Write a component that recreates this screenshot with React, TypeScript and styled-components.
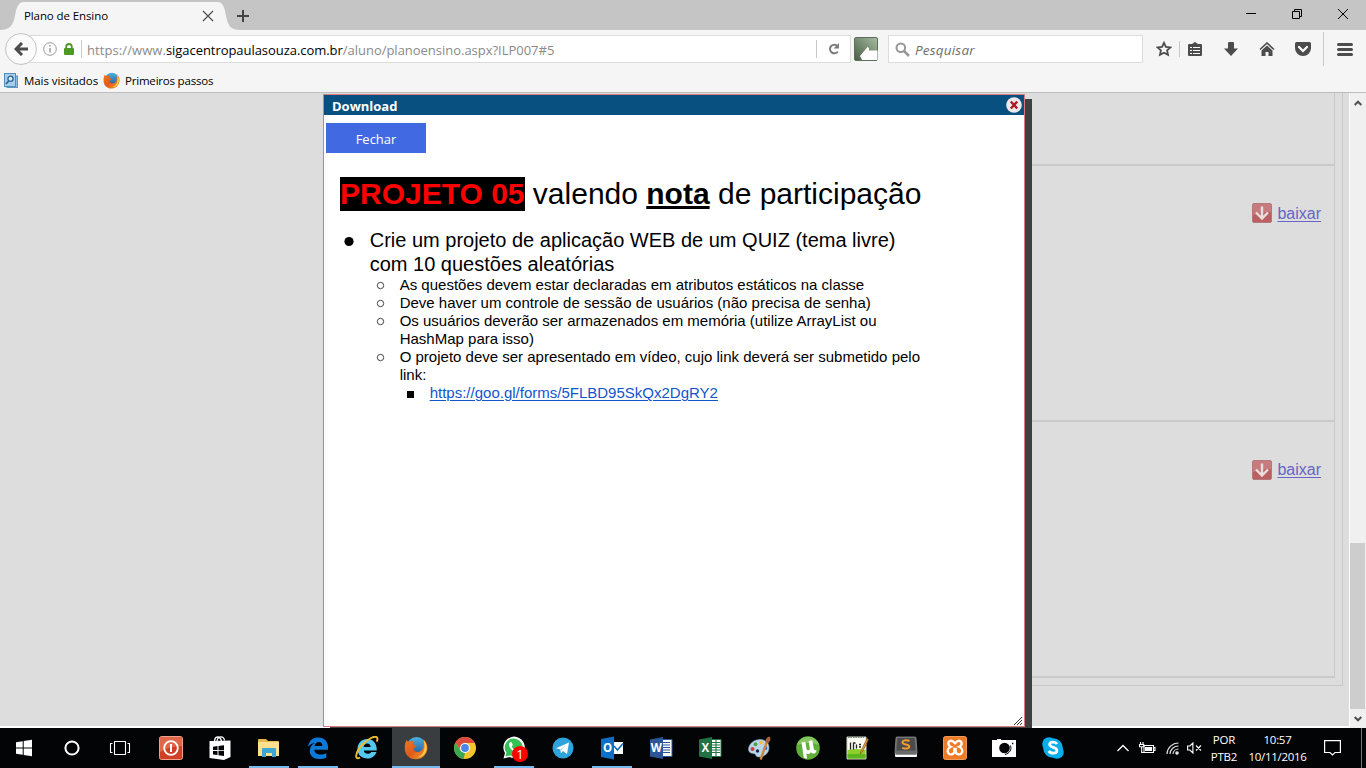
import React from "react";
import styled, { createGlobalStyle } from "styled-components";

const Global = createGlobalStyle`
  * { box-sizing: border-box; }
  body { margin: 0; overflow: hidden; }
  svg { display: block; flex: none; }
`;

const Screen = styled.div`
  width: 1366px;
  height: 768px;
  display: flex;
  flex-direction: column;
  overflow: hidden;
  background: #f5f5f5;
  font-family: "Open Sans", "Noto Sans", sans-serif;
  color: #000;
`;

const Label = styled.span<{ $size?: number; $track?: number; $color?: string }>`
  font-size: ${(p) => p.$size ?? 11.5}px;
  letter-spacing: ${(p) => p.$track ?? 0}px;
  color: ${(p) => p.$color ?? "#000"};
  white-space: pre;
  line-height: 16px;
`;

/* ---------- title bar ---------- */

const TitleBar = styled.div`
  height: 30px;
  flex: none;
  display: flex;
  align-items: flex-end;
  background: #c5c5c5;
`;

const TabBody = styled.div`
  width: 194px;
  height: 28px;
  display: flex;
  align-items: center;
  justify-content: space-between;
  background: #f5f5f5;
  padding: 0 4px 0 0;
`;

const NewTab = styled.div`
  flex: 1;
  height: 28px;
  padding-top: 8px;
  margin-left: -3px;
`;

const WindowButton = styled.div`
  width: 46px;
  height: 30px;
  display: flex;
  align-items: center;
  justify-content: center;
  padding-bottom: 2px;
`;

/* ---------- navigation bar ---------- */

const NavBar = styled.div`
  height: 38px;
  flex: none;
  display: flex;
  align-items: center;
  padding-left: 5px;
`;

const BackButton = styled.div`
  width: 32px;
  height: 32px;
  flex: none;
  border-radius: 50%;
  border: 1px solid #c4c4c4;
  background: #fafafa;
  display: flex;
  align-items: center;
  justify-content: center;
  z-index: 1;
`;

const AddressBox = styled.div`
  width: 828px;
  height: 28px;
  flex: none;
  margin-left: -14px;
  padding-left: 19px;
  border: 1px solid #dcdcdc;
  background: #fff;
  display: flex;
  align-items: center;
`;

const Divider = styled.div<{ $h: number; $pull?: number }>`
  width: 1px;
  height: ${(p) => p.$h}px;
  margin-left: ${(p) => -(p.$pull ?? 0)}px;
  flex: none;
  background: #c9c9c9;
`;

const Address = styled.div`
  flex: 1;
  margin-left: 5px;
  padding-top: 1px;
  font-size: 0;
`;

const SearchBox = styled.div`
  width: 255px;
  height: 28px;
  flex: none;
  margin-left: 7px;
  padding-left: 6px;
  border: 1px solid #dcdcdc;
  background: #fff;
  display: flex;
  align-items: center;
  gap: 5px;
  font-style: italic;
  & > span { padding-top: 1px; }
`;

const ToolSlot = styled.div<{ $w: number }>`
  width: ${(p) => p.$w}px;
  display: flex;
  justify-content: center;
  flex: none;
`;

/* ---------- bookmarks ---------- */

const Bookmarks = styled.div`
  height: 25px;
  flex: none;
  display: flex;
  align-items: center;
  padding-left: 4px;
  border-bottom: 1px solid #bcbcbc;
`;

const Bookmark = styled.div<{ $w: number; $gap: number }>`
  width: ${(p) => p.$w}px;
  display: flex;
  align-items: center;
  gap: ${(p) => p.$gap}px;
  & > span { padding-top: 1px; }
`;

/* ---------- page ---------- */

const Viewport = styled.div`
  height: 635px;
  flex: none;
  display: flex;
  position: relative;
  overflow: hidden;
  background: #fff;
`;

const Page = styled.div`
  width: 1349px;
  height: 633px;
  padding-left: 330px;
  background: #dddddd;
`;

const OuterPanel = styled.div`
  width: 1013px;
  height: 593px;
  border: solid #c8c8c8;
  border-width: 0 1px 1px 0;
`;

const Lessons = styled.div`
  width: 1005px;
  height: 585px;
  border-right: 1px solid #c8c8c8;
`;

const Lesson = styled.div<{ $h: number }>`
  height: ${(p) => p.$h}px;
  border-bottom: 2px solid #c9c9c9;
  display: flex;
  justify-content: flex-end;
  align-items: flex-start;
  padding: 38px 13px 0 0;
`;

const DownloadLink = styled.a<{ $lift?: number }>`
  display: flex;
  align-items: flex-start;
  gap: 5px;
  font: 16px/20px "Liberation Sans", Arial, sans-serif;
  color: #6a63c6;
  text-decoration: underline;
  text-underline-offset: 2px;
  & > svg { margin-top: ${(p) => -(p.$lift ?? 0)}px; }
`;

const ScrollBar = styled.div`
  width: 16px;
  height: 635px;
  margin-left: 1px;
  background: #f0f0f0;
  display: flex;
  flex-direction: column;
  align-items: center;
  padding: 7px 1px 6px 0;
`;

const ScrollThumb = styled.div`
  width: 15px;
  height: 166px;
  margin: 437px 0 auto;
  background: #cdcdcd;
`;

/* ---------- dialog ---------- */

const Dialog = styled.div`
  position: absolute;
  left: 323px;
  top: 1px;
  width: 702px;
  height: 633px;
  border: 1px solid #d97c80;
  background: #fff;
  box-shadow: 7px 5px 0 #404040;
`;

const DialogTitle = styled.div`
  height: 20px;
  background: #07507f;
  display: flex;
  align-items: center;
  justify-content: space-between;
  padding: 0 2px 0 8px;
  font-weight: 700;
  & > span { padding-top: 1px; }
`;

const CloseButton = styled.button`
  display: flex;
  align-items: center;
  justify-content: center;
  width: 100px;
  height: 30px;
  margin: 8px 0 0 2px;
  padding: 2px 0 0;
  border: 0;
  background: #4169e1;
  font-family: inherit;
`;

const Doc = styled.div`
  font-family: "Liberation Sans", Arial, sans-serif;
  padding: 24px 0 0 15.7px;
`;

const DocTitle = styled.h1`
  margin: 0 0 17px;
  padding-left: 0.3px;
  font-size: 30px;
  line-height: 34px;
  font-weight: 400;
  white-space: pre;
`;

const Mark = styled.b`
  background: #000;
  color: #f00;
  padding-bottom: 1px;
`;

const List = styled.ul<{ $size: number; $line: number }>`
  list-style: none;
  margin: 0;
  padding: 0;
  font-size: ${(p) => p.$size}px;
  line-height: ${(p) => p.$line}px;
`;

const Item = styled.li<{ $line: number }>`
  display: grid;
  grid-template-columns: 30px auto;
  white-space: pre;
  & > svg { height: ${(p) => p.$line}px; }
`;

const DocLink = styled.a`
  color: #1155cc;
  text-decoration: underline;
  text-underline-offset: 2px;
`;

const Grip = styled.div`
  position: absolute;
  right: 2px;
  bottom: 1px;
`;

/* ---------- taskbar ---------- */

const Taskbar = styled.div`
  height: 40px;
  flex: none;
  display: flex;
  background: #020406;
`;

const TaskButton = styled.div<{ $active?: boolean; $first?: boolean }>`
  width: 48px;
  height: 40px;
  flex: none;
  margin-left: ${(p) => (p.$first ? 0 : 1)}px;
  display: flex;
  flex-direction: column;
  align-items: center;
  justify-content: space-between;
  padding-top: 8px;
  background: ${(p) => (p.$active ? "#3a3d40" : "transparent")};
`;

const RunningLine = styled.div<{ $w: number }>`
  width: ${(p) => p.$w}px;
  height: 2px;
  background: #76b9ed;
`;

const AppGroup = styled.div`
  display: flex;
  margin-left: 2px;
`;

const Tray = styled.div`
  flex: 1;
  display: flex;
  align-items: center;
  padding: 0 4px 0 40px;
  & > div:last-child { margin-left: auto; background: #777; }
`;

const TrayText = styled.div<{ $w: number; $pull?: number }>`
  width: ${(p) => p.$w}px;
  margin-left: ${(p) => -(p.$pull ?? 0)}px;
  display: flex;
  flex-direction: column;
  align-items: center;
  padding-bottom: 1px;
  & > span { line-height: 17px; }
`;

/* ---------- icons ---------- */

const FirefoxIcon = ({ s = 24 }: { s?: number }) => (
  <svg width={s} height={s} viewBox="0 0 24 24">
    <defs>
      <linearGradient id={"fx" + s} x1="0" y1="0" x2="1" y2="1">
        <stop offset="0" stopColor="#ec7a1f" />
        <stop offset=".5" stopColor="#e25a1c" />
        <stop offset="1" stopColor="#f5a52c" />
      </linearGradient>
      <linearGradient id={"globe" + s} x1="0" y1="0" x2="0" y2="1">
        <stop offset="0" stopColor="#4cb2e2" />
        <stop offset="1" stopColor="#1c4f96" />
      </linearGradient>
    </defs>
    <circle cx="12.500" cy="11" r="10" fill={`url(#globe${s})`} />
    <path d="M2.500 4c.5 1 1.500 1.800 3 1.700 1.500-.8 3.500-1 5 0-1.500 1-1.800 2-1.300 2.800l3.300 1c-.2 1.800-2.800 1.800-3 3.500.7 3 4.300 4 7.300 2 2.700-2.200 3-5.500 1.700-8.500 1 .4 1.700 1.200 2 2 .2-2-.3-3.800-1.500-5.500 5.500 4 6 12 1 17C14 25.500 3.500 24 1.200 15.500.3 11.500.8 7 2.500 4z" fill={`url(#fx${s})`} />
    <path d="M19.500 4c4.500 4.500 4 12-.5 15.500-1.500 1.200-3.500 2-5.500 1.800 6.500-2 8.500-9 6-17.300z" fill="#fdd04a" />
  </svg>
);

const DownloadIcon = () => (
  <svg width="20" height="20" viewBox="0 0 20 20">
    <rect x=".5" y=".5" width="19" height="19" rx="1.500" fill="#bb5f63" stroke="#b5797b" />
    <path d="M1 1h18v8q-9 0-18 3z" fill="#c77b7e" />
    <path d="M10 3.500v11.500M4 9.500l6 6 6-6" fill="none" stroke="#e9dede" strokeWidth="2.400" />
  </svg>
);

const WindowsIcon = () => (
  <svg width="16" height="24" viewBox="0 0 16 24">
    <path d="M0 6.200l6.700-1v6.300H0zM7.700 5L16 3.800v7.700H7.700zM0 12.500h6.700v6.300L0 17.800zM7.700 12.500H16v7.700L7.700 19z" fill="#fff" />
  </svg>
);
const CortanaIcon = () => (
  <svg width="24" height="24"><circle cx="12" cy="12" r="6.600" fill="none" stroke="#fff" strokeWidth="2" /></svg>
);
const TaskViewIcon = () => (
  <svg width="24" height="24" fill="none" stroke="#fff" strokeWidth="1.100">
    <path d="M6.500 5.500h11v13h-11zM4.500 7.500h-2v9h2M19.500 7.500h2v9h-2" />
  </svg>
);
const PowerIcon = () => (
  <svg width="24" height="24">
    <rect x=".5" y=".5" width="23" height="23" rx="2" fill="#cf4026" stroke="#f0a08c" />
    <path d="M1 1h22v9Q10 10 1 16z" fill="#e0664a" />
    <circle cx="12" cy="12" r="6.800" fill="none" stroke="#fff" strokeWidth="1.800" />
    <path d="M12 8v8" stroke="#fff" strokeWidth="2" />
  </svg>
);
const StoreIcon = () => (
  <svg width="24" height="24">
    <path d="M1.500 5l21-.5V21L16 24l-14.500-2z" fill="#fff" />
    <path d="M6.500 6C6.500-.5 12-.5 13.500 5M9 5c1-6 7-5 7.500-.5" fill="none" stroke="#fff" strokeWidth="1.300" />
    <path d="M5 10.700l4.500-.6v4H5zM10.500 10l5.500-.8v5h-5.500zM5 15h4.500v4L5 18.500zM10.500 15H16v5l-5.500-.8z" fill="#020406" />
  </svg>
);
const FolderIcon = () => (
  <svg width="24" height="24">
    <path d="M1 4q0-1 1-1h7l2 2h10q1 0 1 1v14H1z" fill="#e9b94f" />
    <path d="M1 6h21v14H1z" fill="#fbe08e" />
    <path d="M5 13q0-1 1-1h12q1 0 1 1v8h-4v-4H9v4H5z" fill="#3ca7d4" />
  </svg>
);
const EdgeIcon = () => (
  <svg width="24" height="24">
    <path d="M2 10.800C3 4 7.500 1.500 12 1.500c7 0 10 5 10 9v3.300H8.300c.2 3.400 3 4.700 6 4.700 2.400 0 4.400-.6 6-1.600v4.600c-2 1.200-4.500 1.600-7 1.600-6 0-9.500-3.400-9.500-8 0-4 2.200-6.500 5-8-3 .7-5.200 1.700-6.800 3.700zM8.600 10h7.800c0-2.500-1.400-4-3.700-4S8.900 7.700 8.600 10z" fill="#0c7ad8" />
  </svg>
);
const IeIcon = () => (
  <svg width="24" height="24">
    <path d="M2.500 13C2.500 7 7 3 12.200 3c6 0 9.800 4.500 9.600 11.500H8.800c.3 2.300 1.800 3.200 3.800 3.200 1.600 0 3-.6 3.700-1.800h5.200c-1.300 4-4.600 6.600-9.200 6.600-5.600 0-9.800-3.500-9.800-9.500zM8.700 11h7c-.2-2.200-1.400-3.400-3.400-3.400S9 8.800 8.700 11z" fill="#55c8ef" />
    <path d="M5 21.500C-1.500 25 1 15 7.500 8.500 13 3 20-1 22 1.500c.8 1.200.3 3-.3 4.200" fill="none" stroke="#f0bd2e" strokeWidth="1.900" />
  </svg>
);
const ChromeIcon = () => (
  <svg width="24" height="24">
    <circle cx="12" cy="12" r="11" fill="#f4c52c" />
    <path d="M2.500 6.500A11 11 0 0 1 21.700 7H12L7.500 14z" fill="#dc4b3e" />
    <path d="M2.500 6.500L7.600 14.700 12 17l-1.500 5.900A11 11 0 0 1 2.500 6.500z" fill="#3aa757" />
    <circle cx="12" cy="12" r="5" fill="#fff" />
    <circle cx="12" cy="12" r="3.900" fill="#4a86e8" />
  </svg>
);
const BadgeSlot = styled.div`
  position: relative;
  width: 24px;
  height: 24px;
`;
const Badge = styled.div`
  position: absolute;
  left: 10px;
  top: 10px;
  width: 16px;
  height: 16px;
  border-radius: 50%;
  background: #f00;
  color: #fff;
  font-size: 13px;
  line-height: 16px;
  text-align: center;
`;
const WhatsAppIcon = () => (
  <BadgeSlot>
    <svg width="24" height="24">
      <path d="M1.500 22.500L3 17A10.700 10.700 0 1 1 7.500 21z" fill="#fff" />
      <path d="M3.400 20.600l1-4A8.900 8.900 0 1 1 8 19.500z" fill="#35c255" />
      <path d="M8.500 6c-3 2-1 6 2 8.500 3 2.300 6 2.500 7-.5l-3-1.600-1.300 1.400c-1.600-.6-2.800-1.800-3.500-3.300l1.100-1.400L9.500 6z" fill="#fff" />
    </svg>
    <Badge>1</Badge>
  </BadgeSlot>
);
const TelegramIcon = () => (
  <svg width="24" height="24">
    <circle cx="12" cy="12" r="10.500" fill="#2fa3dc" />
    <path d="M5 12.300L18 6.500 16 18l-4-3-2 2.200-.6-3.600z" fill="#fff" />
    <path d="M9.500 13.500L15 9l-4.500 5.200-.5 3z" fill="#b9d9ea" />
  </svg>
);

const OfficeLetter = styled.text`
  font: 700 11.500px "Open Sans", sans-serif;
  fill: #fff;
  text-anchor: middle;
`;
const OutlookIcon = () => (
  <svg width="24" height="24">
    <path d="M12 6h11v12H12z" fill="#fff" />
    <path d="M14 10l3.500 4L23 7.500" fill="none" stroke="#0d68b8" strokeWidth="1.500" />
    <path d="M1 3l13-2.500v23L1 21z" fill="#0f6fc6" />
    <OfficeLetter x="7.500" y="16">O</OfficeLetter>
  </svg>
);
const WordIcon = () => (
  <svg width="24" height="24">
    <path d="M12 3.500h11v17H12z" fill="#fff" stroke="#2b579a" />
    <path d="M14 6.500h7M14 9h7M14 11.500h7M14 14h7M14 16.500h7" stroke="#2b579a" strokeWidth="1.100" />
    <path d="M1 3.500L14 1v22L1 20.500z" fill="#2b579a" />
    <OfficeLetter x="7.400" y="16">W</OfficeLetter>
  </svg>
);
const ExcelIcon = () => (
  <svg width="24" height="24">
    <path d="M12 3.500h11v17H12z" fill="#fff" stroke="#217346" />
    <path d="M13 6.500h9M13 9h9M13 11.500h9M13 14h9M13 16.500h9M18 4v16" stroke="#217346" strokeWidth="1.100" />
    <path d="M1 3.500L14 1v22L1 20.500z" fill="#217346" />
    <OfficeLetter x="7.400" y="16">X</OfficeLetter>
  </svg>
);
const PaintIcon = () => (
  <svg width="24" height="24">
    <path d="M1.500 13C2 7 8 3 14 3.500c5 .5 8 3.500 8 8 0 6-5 9.500-10 9.500-3 0-3-2-4-3-2-1-6.500 0-6.500-5z" fill="#b9d6ea" stroke="#7fa4c0" strokeWidth=".6" />
    <circle cx="5.500" cy="13" r="2" fill="#c8403a" /><circle cx="8.500" cy="8.300" r="2" fill="#4ea64b" />
    <circle cx="14" cy="6.700" r="1.900" fill="#f0c33a" /><circle cx="18.500" cy="12" r="1.900" fill="#3565b8" />
    <circle cx="10.500" cy="15" r="1.700" fill="#16283a" />
    <path d="M20.500 4L14 22.500" stroke="#c88843" strokeWidth="2.400" strokeLinecap="round" />
    <path d="M18.500 6c0-3 1-5 4-5.500C24.500 3 23 5.500 21 7.500z" fill="#a5623a" />
  </svg>
);
const UTorrentIcon = () => (
  <svg width="24" height="24">
    <circle cx="12" cy="12" r="11.800" fill="#5fae3c" />
    <path d="M1 9A11.500 11.500 0 0 1 23 9q-10-4-22 0z" fill="#85c65f" />
    <path d="M5.500 6.500l3.800-.8 1.300 7.200c.5 2 3.400 1.500 3.200-.5L12.600 5l3.700-.7 1.500 8.500c.3 1.300 1.200 1.700 2.700 1.400-.2 2-1 3-2.500 3.200-1.300.1-2.300-.3-3-1.200-1 1.700-3 2.200-4.700 1.500l.9 5.100-3.400-1z" fill="#fff" />
  </svg>
);
const NotepadIcon = () => (
  <svg width="24" height="24">
    <path d="M2 1h19v22H2z" fill="#f7fbf0" stroke="#ccd6c0" />
    <path d="M2.500 14q9-2 18 0v8.500h-18z" fill="#8ed02b" />
    <path d="M2.500 18h18v4.500h-18z" fill="#5cb51d" />
    <path d="M3 1.500h16" stroke="#7b8574" strokeDasharray="1.500 1" />
    <path d="M5.500 6.500v7M8.500 6.500v7M8.500 7h2M11.500 8.500v4M14 8.500h2M14 11h2" stroke="#222" strokeWidth="1.300" fill="none" />
    <path d="M22 2.500L16 15l-1 3 2.400-2 6-12.500z" fill="#e7a23a" stroke="#93521c" strokeWidth=".7" />
  </svg>
);
const SublimeIcon = () => (
  <svg width="24" height="24">
    <path d="M1 17h22v3q0 1-1 1H2q-1 0-1-1z" fill="#fff" />
    <path d="M3 1h18q1 0 1 1l1 15q0 1.500-2 1.500H3q-2 0-2-1.500L2 2q0-1 1-1z" fill="#6a6a6a" stroke="#8b8b8b" strokeWidth=".8" />
    <path d="M3.500 2h17l1 12.500h-19z" fill="#4b4b4b" />
    <path d="M15.500 5c-3.200-1.300-7-.8-7 1.400 0 2.600 6.800 1.600 6.800 4.200 0 2.300-3.900 2.500-7 1.200" stroke="#f39a2d" strokeWidth="2" fill="none" />
  </svg>
);
const XamppIcon = () => (
  <svg width="24" height="24">
    <rect x=".5" y=".5" width="23" height="23" rx="2" fill="#ee7b26" stroke="#f19a58" />
    <path d="M6.500 5.200c2-1.300 4 .3 5.500 2 1.500-1.700 3.500-3.300 5.500-2 2.500 2 .5 5-1.200 5.600 2.700 1.200 4 4.200 2.200 6.400-2 2.200-4.700 1.200-5.800-.8V13h-1.400v3.400c-1.100 2-3.800 3-5.800.8-1.800-2.200-.5-5.200 2.200-6.400C6 10.200 4 7.200 6.500 5.200z" fill="none" stroke="#fff" strokeWidth="2.300" />
  </svg>
);
const CameraIcon = () => (
  <svg width="24" height="24">
    <path d="M0 4h5V3h4v1h15v17H0z" fill="#fff" />
    <circle cx="12.500" cy="12" r="5.300" fill="#020406" />
    <path d="M18.500 9.500c1.500 4-1 8-5.500 9" fill="none" stroke="#020406" strokeWidth="1" />
    <path d="M20 7.500h1.300" stroke="#020406" strokeWidth="1.300" />
  </svg>
);
const SkypeIcon = () => (
  <svg width="24" height="24">
    <circle cx="8" cy="8" r="6.800" fill="#00aff0" /><circle cx="16" cy="16" r="6.800" fill="#00aff0" />
    <circle cx="12" cy="12" r="9.800" fill="#0caeea" />
    <path d="M16 8c-1.500-2.500-7.300-2.600-7.400.6 0 3.400 7.300 2.200 7.300 5.800 0 3.500-6.500 3.500-8.100.6" fill="none" stroke="#fff" strokeWidth="2.700" />
  </svg>
);

const apps: { icon: React.ReactNode; line?: number; active?: boolean }[] = [
  { icon: <PowerIcon /> },
  { icon: <StoreIcon /> },
  { icon: <FolderIcon />, line: 40 },
  { icon: <EdgeIcon />, line: 40 },
  { icon: <IeIcon /> },
  { icon: <FirefoxIcon />, line: 48, active: true },
  { icon: <ChromeIcon /> },
  { icon: <WhatsAppIcon />, line: 40 },
  { icon: <TelegramIcon /> },
  { icon: <OutlookIcon />, line: 40 },
  { icon: <WordIcon /> },
  { icon: <ExcelIcon /> },
  { icon: <PaintIcon /> },
  { icon: <UTorrentIcon /> },
  { icon: <NotepadIcon /> },
  { icon: <SublimeIcon /> },
  { icon: <XamppIcon /> },
  { icon: <CameraIcon /> },
  { icon: <SkypeIcon /> },
];

const details = [
  "As questões devem estar declaradas em atributos estáticos na classe",
  "Deve haver um controle de sessão de usuários (não precisa de senha)",
  "Os usuários deverão ser armazenados em memória (utilize ArrayList ou\nHashMap para isso)",
  "O projeto deve ser apresentado em vídeo, cujo link deverá ser submetido pelo\nlink:",
];

export default function App() {
  return (
    <Screen>
      <Global />
      <TitleBar>
        <svg width="24" height="28"><path d="M0 28C10 28 13 23 15 14 16.500 4 19 0 24 0v28z" fill="#f5f5f5" /></svg>
        <TabBody>
          <Label $size={11.5} $track={-0.1}>Plano de Ensino</Label>
          <svg width="12" height="12" stroke="#4c4c4c" strokeWidth="1.200"><path d="M1 1l10 10M11 1L1 11" /></svg>
        </TabBody>
        <svg width="22" height="28"><path d="M22 28C12 28 10 23 8 14 6.500 4 4 0 0 0v28z" fill="#f5f5f5" /></svg>
        <NewTab>
          <svg width="12" height="12" stroke="#444" strokeWidth="2"><path d="M6 0v12M0 6h12" /></svg>
        </NewTab>
        <WindowButton><svg width="10" height="10" stroke="#000"><path d="M0 4.500h10" /></svg></WindowButton>
        <WindowButton>
          <svg width="10" height="10" stroke="#000" fill="none"><path d="M.5 2.500h7v7h-7zM2.500 2.500v-2h7v7h-2" /></svg>
        </WindowButton>
        <WindowButton><svg width="10" height="10" stroke="#000"><path d="M0 0l10 10M10 0L0 10" /></svg></WindowButton>
      </TitleBar>

      <NavBar>
        <BackButton>
          <svg width="14" height="14" fill="none" stroke="#4c4c4c" strokeWidth="3"><path d="M8 1L2 7l6 6M2.500 7H14" /></svg>
        </BackButton>
        <AddressBox>
          <svg width="14" height="14" fill="none" stroke="#9a9a9a"><circle cx="7" cy="7" r="6.300" /><path d="M7 6v4.500M7 3v1.500" strokeWidth="1.500" /></svg>
          <ToolSlot $w={24}>
            <svg width="10" height="12"><rect y="5" width="10" height="7" rx="1" fill="#4c9a24" /><path d="M2.200 6V3.800a2.800 2.800 0 0 1 5.600 0V6" fill="none" stroke="#4c9a24" strokeWidth="1.800" /></svg>
          </ToolSlot>
          <Divider $h={18} />
          <Address>
            <Label $size={13} $track={0.08} $color="#8a8a8a">https://www.</Label>
            <Label $size={13} $track={-0.05}>sigacentropaulasouza.com.br</Label>
            <Label $size={13} $track={-0.02} $color="#8a8a8a">/aluno/planoensino.aspx?ILP007#5</Label>
          </Address>
          <Divider $h={18} />
          <ToolSlot $w={33}>
            <svg width="12" height="12" fill="none"><path d="M9.500 3.200A4.300 4.300 0 1 0 9.800 8.500" stroke="#7d7d7d" strokeWidth="2" /><path d="M11 0v5.500H5.500z" fill="#7d7d7d" /></svg>
          </ToolSlot>
        </AddressBox>
        <ToolSlot $w={30}>
          <svg width="24" height="24">
            <defs><linearGradient id="thumb" x1="0" y1="1" x2="1" y2="0"><stop offset="0" stopColor="#475d45" /><stop offset="1" stopColor="#a5bd9f" /></linearGradient></defs>
            <rect x=".5" y=".5" width="23" height="23" rx="1.500" fill="url(#thumb)" stroke="#5c6f5b" />
            <path d="M6 19l7.500-9 1.500 1v2.500h8.500V23H8z" fill="#fff" />
          </svg>
        </ToolSlot>
        <SearchBox>
          <svg width="15" height="15" fill="none" stroke="#969696"><circle cx="5.800" cy="5.800" r="4.300" strokeWidth="2" /><path d="M9 9l5 5" strokeWidth="2.500" /></svg>
          <Label $size={13.5} $track={0.2} $color="#6e6e6e">Pesquisar</Label>
        </SearchBox>
        <ToolSlot $w={42}>
          <svg width="16" height="16" fill="none" stroke="#4c4c4c" strokeWidth="1.800"><path d="M8 1.800l1.900 4.100 4.500.5-3.300 3 .9 4.500L8 11.700l-4 2.200.9-4.500-3.300-3 4.500-.5z" /></svg>
        </ToolSlot>
        <Divider $h={16} $pull={6} />
        <ToolSlot $w={30}>
          <svg width="14" height="15"><path d="M1 2h3l3-2 3 2h3q1 0 1 1v10q0 1-1 1H1q-1 0-1-1V3q0-1 1-1z" fill="#4c4c4c" /><path d="M2 5.500h2M2 8.500h2M2 11.500h2M5 5.500h7M5 8.500h7M5 11.500h7" stroke="#fff" strokeWidth="1.200" /></svg>
        </ToolSlot>
        <ToolSlot $w={42}>
          <svg width="14" height="14" fill="#4c4c4c"><path d="M4 1q0-1 1-1h4q1 0 1 1v5.500h4L7 14 0 6.500h4z" /></svg>
        </ToolSlot>
        <ToolSlot $w={30}>
          <svg width="16" height="14"><path d="M1 7.500l7-6.500 7 6.500" fill="none" stroke="#4c4c4c" strokeWidth="1.600" /><path d="M8 3.500l5.500 5V14H9.500v-4h-3v4h-4V8.500z" fill="#4c4c4c" /></svg>
        </ToolSlot>
        <ToolSlot $w={42}>
          <svg width="16" height="14"><path d="M1.500 0h13Q16 0 16 1.500V6a8 8 0 0 1-16 0V1.500Q0 0 1.500 0z" fill="#4c4c4c" /><path d="M4 5l4 4 4-4" fill="none" stroke="#fff" strokeWidth="2.200" strokeLinecap="round" /></svg>
        </ToolSlot>
        <Divider $h={34} $pull={1} />
        <ToolSlot $w={42}>
          <svg width="16" height="13" stroke="#4c4c4c" strokeWidth="3" strokeLinecap="round"><path d="M1.500 1.500h13M1.500 6.500h13M1.500 11.500h13" /></svg>
        </ToolSlot>
      </NavBar>

      <Bookmarks>
        <Bookmark $w={99} $gap={6}>
          <svg width="14" height="15"><rect x="3" y="3" width="10.500" height="11.500" fill="#8fbce0" stroke="#5d96c4" /><rect x=".5" y=".5" width="11" height="13" fill="#a7cdea" stroke="#4f8fc0" /><circle cx="6.500" cy="5.800" r="2.600" fill="#d8ebf8" stroke="#28628f" strokeWidth="1.300" /><path d="M4.800 7.800L2 11" stroke="#28628f" strokeWidth="1.600" /></svg>
          <Label $size={11.5} $track={-0.07}>Mais visitados</Label>
        </Bookmark>
        <Bookmark $w={120} $gap={5}>
          <FirefoxIcon s={17} />
          <Label $size={11.5} $track={-0.2}>Primeiros passos</Label>
        </Bookmark>
      </Bookmarks>

      <Viewport>
        <Page>
          <OuterPanel>
            <Lessons>
              <Lesson $h={73} />
              <Lesson $h={256}>
                <DownloadLink $lift={1}><DownloadIcon />baixar</DownloadLink>
              </Lesson>
              <Lesson $h={256}>
                <DownloadLink><DownloadIcon />baixar</DownloadLink>
              </Lesson>
            </Lessons>
          </OuterPanel>
        </Page>
        <ScrollBar>
          <svg width="8" height="6" fill="none" stroke="#505050" strokeWidth="2"><path d="M.7 5L4 1.700 7.300 5" /></svg>
          <ScrollThumb />
          <svg width="8" height="6" fill="none" stroke="#505050" strokeWidth="2"><path d="M.7 1L4 4.300 7.300 1" /></svg>
        </ScrollBar>
        <Dialog>
          <DialogTitle>
            <Label $size={13} $color="#fff">Download</Label>
            <svg width="16" height="16"><circle cx="8" cy="8" r="7.800" fill="#eee9ea" /><path d="M4.800 4.500l6.400 7M11.200 4.500l-6.400 7" stroke="#a91c28" strokeWidth="2.400" /></svg>
          </DialogTitle>
          <CloseButton><Label $size={13} $color="#fff">Fechar</Label></CloseButton>
          <Doc>
            <DocTitle><Mark>PROJETO 05</Mark> valendo <b><u>nota</u></b> de participação</DocTitle>
            <List $size={20} $line={24}>
              <Item $line={24}>
                <svg width="20" height="24"><circle cx="9" cy="13.500" r="4.600" /></svg>
                <div>
                  {"Crie um projeto de aplicação WEB de um QUIZ (tema livre)\ncom 10 questões aleatórias"}
                  <List $size={15} $line={18}>
                    {details.map((text, i) => (
                      <Item key={i} $line={18}>
                        <svg width="20" height="18"><circle cx="10.500" cy="9.500" r="3.200" fill="none" stroke="#333" strokeWidth=".9" /></svg>
                        <div>
                          {text}
                          {i === 3 && (
                            <List $size={15} $line={18}>
                              <Item $line={18}>
                                <svg width="20" height="18"><rect x="7" y="7" width="7" height="7" /></svg>
                                <DocLink>https://goo.gl/forms/5FLBD95SkQx2DgRY2</DocLink>
                              </Item>
                            </List>
                          )}
                        </div>
                      </Item>
                    ))}
                  </List>
                </div>
              </Item>
            </List>
          </Doc>
          <Grip>
            <svg width="8" height="8" stroke="#333" strokeWidth="1"><path d="M0 8L8 0M3 8l5-5M6 8l2-2" /></svg>
          </Grip>
        </Dialog>
      </Viewport>

      <Taskbar>
        <TaskButton $first><WindowsIcon /></TaskButton>
        <TaskButton $first><CortanaIcon /></TaskButton>
        <TaskButton $first><TaskViewIcon /></TaskButton>
        <AppGroup>
          {apps.map((app, i) => (
            <TaskButton key={i} $active={app.active}>
              {app.icon}
              {app.line && <RunningLine $w={app.line} />}
            </TaskButton>
          ))}
        </AppGroup>
        <Tray>
          <ToolSlot $w={12}><svg width="12" height="8" fill="none" stroke="#fff" strokeWidth="1.300"><path d="M.5 7L6 1.500 11.500 7" /></svg></ToolSlot>
          <ToolSlot $w={37}>
            <svg width="17" height="12" fill="none" stroke="#fff" strokeWidth="1.100"><path d="M5 3.500h9.500v7H5zM14.500 5.500h1.500v3h-1.500" /><path d="M6.500 5.500h6v3h-6z" fill="#fff" /><path d="M1.500 0v2M4 0v2M.5 2.500h4.300v2.300H.5zM2.700 5v5.500H5" /></svg>
          </ToolSlot>
          <ToolSlot $w={14}>
            <svg width="14" height="13" fill="none" stroke="#ddd" strokeWidth="1.200"><path d="M1 12A11.500 11.500 0 0 1 12.500 1M4 12A8.500 8.500 0 0 1 12.500 4M7 12a5.500 5.500 0 0 1 5.500-5" /><circle cx="11" cy="11" r="1.200" fill="#fff" /></svg>
          </ToolSlot>
          <ToolSlot $w={29}>
            <svg width="15" height="12" fill="none" stroke="#fff" strokeWidth="1.100"><path d="M.6 4h2.300l3-3v10l-3-3H.6zM9 3.500l5 5M14 3.500l-5 5" /></svg>
          </ToolSlot>
          <TrayText $w={42} $pull={6}>
            <Label $size={11.5} $color="#fff" $track={-0.2}>POR</Label>
            <Label $size={11.5} $color="#fff" $track={-0.2}>PTB2</Label>
          </TrayText>
          <TrayText $w={65}>
            <Label $size={11.5} $color="#fff" $track={-0.3}>10:57</Label>
            <Label $size={11.5} $color="#fff" $track={-0.3}>10/11/2016</Label>
          </TrayText>
          <ToolSlot $w={45}>
            <svg width="17" height="16" fill="none" stroke="#fff" strokeWidth="1.200"><path d="M.6.6h15.800v11.900H11L8.500 15 6 12.500H.6z" /></svg>
          </ToolSlot>
          <Divider $h={40} />
        </Tray>
      </Taskbar>
    </Screen>
  );
}
